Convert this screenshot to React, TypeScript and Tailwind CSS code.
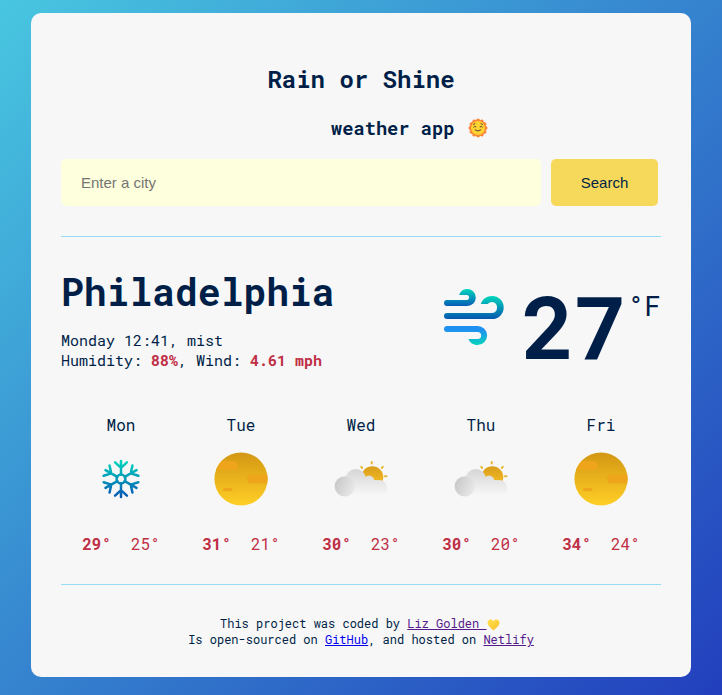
import React from "react";

type Kind = "snow" | "sun" | "cloud";

const days: { name: string; kind: Kind; max: string; min: string }[] = [
  { name: "Mon", kind: "snow", max: "29°", min: "25°" },
  { name: "Tue", kind: "sun", max: "31°", min: "21°" },
  { name: "Wed", kind: "cloud", max: "30°", min: "23°" },
  { name: "Thu", kind: "cloud", max: "30°", min: "20°" },
  { name: "Fri", kind: "sun", max: "34°", min: "24°" },
];

function SunFace() {
  return (
    <svg width="20" height="20" viewBox="0 0 20 20" className="shrink-0">
      <g fill="#fb8636">
        {[0, 30, 60, 90, 120, 150, 180, 210, 240, 270, 300, 330].map((a) => (
          <circle key={a} cx="10" cy="2.4" r="1.9" transform={`rotate(${a} 10 10)`} />
        ))}
        <circle cx="10" cy="10" r="8" />
      </g>
      <circle cx="10" cy="10" r="6.9" fill="#fdd231" />
      <g fill="none" stroke="#5b4037" strokeWidth="1" strokeLinecap="round">
        <path d="M5.6 6.4l1.4-.7M14.4 6.4l-1.4-.7M5.7 9q1.1-1.3 2.2-.2M14.3 9q-1.1-1.3-2.2-.2M7.2 12q2.8 2.2 5.6 0" />
      </g>
    </svg>
  );
}

function Heart() {
  return (
    <svg width="13" height="12" viewBox="0 0 13 12" className="mr-[1.5px] ml-px inline-block align-[-3px]">
      <defs>
        <linearGradient id="heart" x1="0" y1="0" x2="1" y2="1">
          <stop stopColor="#ffe04a" />
          <stop offset="1" stopColor="#fbc02d" />
        </linearGradient>
      </defs>
      <path
        d="M6.5 2.5C7.2.9 8.5.4 9.8.6c2 .3 3 2.1 2.5 4.1-.6 2.3-3.2 4.3-5.8 6.7C3.9 9 1.3 7 .7 4.7.2 2.7 1.2.9 3.2.6 4.5.4 5.8.9 6.5 2.5z"
        fill="url(#heart)"
      />
    </svg>
  );
}

function WindIcon() {
  return (
    <svg width="62" height="60" viewBox="0 0 62 60" className="mt-[15px] shrink-0" fill="none">
      <defs>
        <linearGradient id="w1" gradientUnits="userSpaceOnUse" x1="0" y1="3" x2="0" y2="20">
          <stop stopColor="#00d6bd" />
          <stop offset="1" stopColor="#065db6" />
        </linearGradient>
        <linearGradient id="w2" gradientUnits="userSpaceOnUse" x1="0" y1="10" x2="0" y2="33">
          <stop stopColor="#00d6bd" />
          <stop offset="1" stopColor="#0558b0" />
        </linearGradient>
        <linearGradient id="w3" gradientUnits="userSpaceOnUse" x1="0" y1="40" x2="0" y2="59">
          <stop stopColor="#1d91f4" />
          <stop offset=".2" stopColor="#1f90f1" />
          <stop offset="1" stopColor="#05d5bd" />
        </linearGradient>
      </defs>
      <path
        fill="url(#w1)"
        d="M4 14H24.3A2.6 2.6 0 0 0 24.3 9H16.2C17.4 5 20.4 3 24.3 3A8.5 8.5 0 0 1 24.3 20H4A3 3 0 0 1 4 14z"
      />
      <path
        fill="url(#w2)"
        d="M4 27H49.2A5.6 5.6 0 0 0 49.2 15.9C47.2 15.9 45.8 16.8 44.7 18H37.8C39.4 13 43.6 10 49.2 10A11.5 11.5 0 0 1 49.2 33H4A3 3 0 0 1 4 27z"
      />
      <path
        fill="url(#w3)"
        d="M4 40H34.6A9.5 9.5 0 0 1 34.6 59C30 59 26.9 56.8 25.4 53H34.6A3.5 3.5 0 0 0 34.6 46H4A3 3 0 0 1 4 40z"
      />
    </svg>
  );
}

const turn = (x: number, y: number, deg: number) => {
  const a = (deg * Math.PI) / 180;
  const px = 27 + x * Math.cos(a) - y * Math.sin(a);
  const py = 27 + x * Math.sin(a) + y * Math.cos(a);
  return `${px.toFixed(2)} ${py.toFixed(2)}`;
};

const snowArms = [0, 60, 120, 180, 240, 300]
  .map(
    (d) =>
      `M${turn(0, -4.2, d)}L${turn(0, -17.9, d)}M${turn(-5.9, -16.6, d)}L${turn(0, -11.2, d)}L${turn(5.9, -16.6, d)}`,
  )
  .join("");

function Snow() {
  return (
    <svg width="54" height="54" viewBox="0 0 54 54" fill="none">
      <defs>
        <linearGradient id="snow" gradientUnits="userSpaceOnUse" x1="0" y1="8" x2="0" y2="46">
          <stop stopColor="#00d8be" />
          <stop offset="1" stopColor="#0654b4" />
        </linearGradient>
      </defs>
      <g stroke="url(#snow)" strokeWidth="2.5" strokeLinecap="round" strokeLinejoin="round">
        <circle cx="27" cy="27" r="4.4" />
        <path d={snowArms} />
      </g>
    </svg>
  );
}

function Sun() {
  return (
    <svg width="54" height="54" viewBox="0 0 54 54">
      <defs>
        <linearGradient id="sun" x1="0" y1="0" x2="0" y2="1">
          <stop stopColor="#d39713" />
          <stop offset="1" stopColor="#ffcf26" />
        </linearGradient>
        <clipPath id="disc">
          <circle cx="27" cy="27" r="26.6" />
        </clipPath>
      </defs>
      <circle cx="27" cy="27" r="26.6" fill="url(#sun)" />
      <g fill="#efa51b" clipPath="url(#disc)">
        <rect x="-4" y="9" width="27.5" height="9" rx="4.5" />
        <rect x="33" y="22.5" width="26" height="9" rx="4.5" />
        <rect x="9" y="36" width="9.5" height="3" rx="1.5" />
      </g>
    </svg>
  );
}

function Cloud() {
  return (
    <svg width="54" height="54" viewBox="0 0 54 54">
      <defs>
        <linearGradient id="csun" x1="0" y1="0" x2="0" y2="1">
          <stop stopColor="#d99d1c" />
          <stop offset="1" stopColor="#fac326" />
        </linearGradient>
        <linearGradient id="cbody" gradientUnits="userSpaceOnUse" x1="0" y1="17" x2="0" y2="45">
          <stop stopColor="#d6d6d6" />
          <stop offset="1" stopColor="#f9f9f9" />
        </linearGradient>
        <linearGradient id="cleft" x1="0" y1="0.3" x2="1" y2="0.7">
          <stop stopColor="#c8c8c8" />
          <stop offset="1" stopColor="#eaeaea" />
        </linearGradient>
      </defs>
      <circle cx="38.3" cy="25.2" r="11" fill="url(#csun)" />
      <path
        d="M37.7 10V11.6M27.2 14.9l.9 1M48.8 14.9l-.9 1M51 24.3H52.5"
        stroke="#e8b42e"
        strokeWidth="2"
        strokeLinecap="round"
      />
      <g fill="url(#cbody)">
        <circle cx="21.8" cy="27.2" r="10.2" />
        <circle cx="35" cy="29" r="5.4" />
        <path d="M10 44.6V28H45A8.3 8.3 0 0 1 45 44.6z" />
      </g>
      <circle cx="10.8" cy="34.4" r="10.2" fill="url(#cleft)" />
    </svg>
  );
}

const icons = { snow: Snow, sun: Sun, cloud: Cloud };

export default function App() {
  return (
    <div className="h-[695px] w-[722px] overflow-hidden bg-[linear-gradient(135deg,#48c6e0_0%,#223fbd_100%)] px-[31px] pt-[13px] font-['Roboto_Mono','DejaVu_Sans_Mono',monospace] text-[#001f48]">
      <main className="h-[664px] rounded-[10px] bg-[#f7f7f7] px-[30px] pt-[50px]">
        <h1 className="text-center text-2xl leading-[32px] font-bold">Rain or Shine</h1>
        <h2 className="mt-5 flex h-[26px] items-center pl-[270px] text-[18.72px] leading-[26px] font-bold">
          <span className="mr-[14px] whitespace-nowrap">weather app</span>
          <SunFace />
        </h2>
        <form className="mt-[18px] flex gap-[10px] font-['Liberation_Sans',Arial,sans-serif] text-[15px]">
          <input
            type="text"
            placeholder="Enter a city"
            className="h-[47px] w-[480px] rounded-[5px] bg-[#feffdc] px-5 placeholder:text-[#757575] placeholder:opacity-100"
          />
          <button type="button" className="h-[47px] w-[107px] rounded-[5px] bg-[#f6d95b] pt-0.5">
            Search
          </button>
        </form>
        <section className="mt-[30px] flex h-[165px] justify-between border-t border-[#97dcf7] pt-[34px]">
          <div>
            <h2 className="-mt-0.5 text-[38px] leading-[44px] font-bold">Philadelphia</h2>
            <div className="mt-[17px] text-[15px] leading-5">
              <p>Monday 12:41, mist</p>
              <p>
                Humidity: <b className="text-[#bf2f45]">88%</b>, Wind:{" "}
                <b className="text-[#bf2f45]">4.61 mph</b>
              </p>
            </div>
          </div>
          <div className="flex">
            <WindIcon />
            <span className="ml-[17px] -mt-0.5 text-[88px] leading-[112px] font-bold">27</span>
            <span className="mt-[19px] text-[28px] leading-[32px] font-normal">°F</span>
          </div>
        </section>
        <section className="mt-[14px] grid h-[170px] grid-cols-5 border-b border-[#97dcf7] text-base">
          {days.map((d) => {
            const Icon = icons[d.kind];
            return (
              <div key={d.name} className="flex flex-col items-center">
                <div className="mb-[27px] h-[10px] leading-[20px]">{d.name}</div>
                <Icon />
                <div className="mt-[28px] flex gap-5 leading-[20px] text-[#bf2f45]">
                  <b>{d.max}</b>
                  <span>{d.min}</span>
                </div>
              </div>
            );
          })}
        </section>
        <footer className="mt-[30px] text-center text-xs leading-4">
          <p className="h-4">
            This project was coded by{" "}
            <a href="#" className="whitespace-pre text-[#551a8b] underline">
              {"Liz Golden "}
            </a>
            <Heart />
          </p>
          <p>
            Is open-sourced on{" "}
            <a href="#" className="text-[#0000ee] underline">
              GitHub
            </a>
            , and hosted on{" "}
            <a href="#" className="text-[#551a8b] underline">
              Netlify
            </a>
          </p>
        </footer>
      </main>
    </div>
  );
}
